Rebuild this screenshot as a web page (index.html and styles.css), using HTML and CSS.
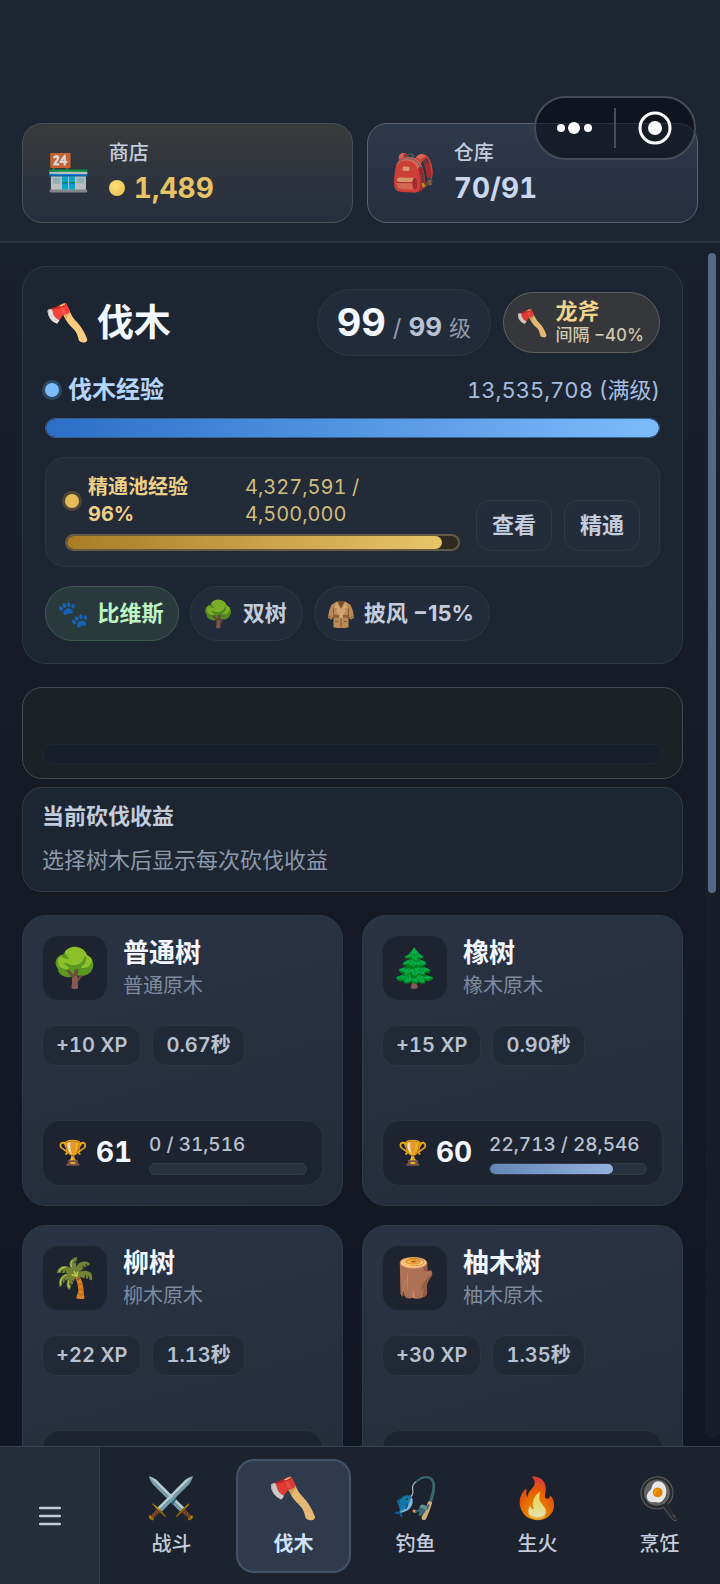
FILE: index.html
```html
<!DOCTYPE html>
<html lang="zh-CN">
<head>
  <meta charset="UTF-8" />
  <meta name="viewport" content="width=device-width, initial-scale=1.0"/>
  <title>伐木</title>
  <link rel="stylesheet" href="styles.css">
</head>
<body>
  <header class="topbar">
    <button class="stat stat-shop">
      <span class="emoji">🏪</span>
      <span class="stat-text">
        <span class="stat-label">商店</span>
        <span class="stat-value"><i class="coin"></i>1,489</span>
      </span>
    </button>
    <button class="stat stat-bag">
      <span class="emoji">🎒</span>
      <span class="stat-text">
        <span class="stat-label">仓库</span>
        <span class="stat-value">70/91</span>
      </span>
    </button>
    <div class="capsule">
      <button aria-label="更多">
        <svg width="36" height="14" viewBox="0 0 36 14" fill="#fff"><circle cx="4" cy="7" r="4"/><circle cx="17" cy="7" r="6"/><circle cx="31" cy="7" r="4"/></svg>
      </button>
      <button aria-label="关闭">
        <svg width="34" height="34" viewBox="0 0 34 34"><circle cx="17" cy="17" r="15" fill="none" stroke="#fff" stroke-width="3"/><circle cx="17" cy="17" r="7" fill="#fff"/></svg>
      </button>
    </div>
  </header>

  <div class="scroll-wrap">
    <main class="content">
      <section class="panel skill">
        <div class="skill-head">
          <h1><span class="emoji">🪓</span>伐木</h1>
          <div class="level"><b>99</b><span>/</span><strong>99</strong><small>级</small></div>
          <button class="tool">
            <span class="emoji">🪓</span>
            <span class="tool-text"><b>龙斧</b><small>间隔 −40%</small></span>
          </button>
        </div>

        <div class="exp-row">
          <span class="exp-name"><i class="dot"></i>伐木经验</span>
          <span class="exp-value">13,535,708 (满级)</span>
        </div>
        <div class="bar bar-exp"><div class="fill" style="width: 100%"></div></div>

        <div class="pool">
          <div class="pool-main">
            <div class="pool-row">
              <i class="dot gold"></i>
              <span class="pool-name">精通池经验 96%</span>
              <span class="pool-value">4,327,591 / 4,500,000</span>
            </div>
            <div class="bar bar-pool"><div class="fill" style="width: 96%"></div></div>
          </div>
          <button class="small-btn">查看</button>
          <button class="small-btn">精通</button>
        </div>

        <div class="buffs">
          <button class="buff active"><span class="emoji">🐾</span>比维斯</button>
          <button class="buff"><span class="emoji">🌳</span>双树</button>
          <button class="buff">
            <svg class="coat" viewBox="0 0 32 32">
              <path d="M11 3 6 6Q3 11 2 20l4 2 2-4v12q8 2 16 0V18l2 4 4-2Q29 11 26 6l-5-3z" fill="#b98a56"/>
              <path d="M11 3 9 9l3 1-1 3 5 6 5-6-1-3 3-1-2-6-5 8z" fill="#d3a671"/>
              <path d="M12 2h8l-4 8z" fill="#75502d"/>
              <path d="M8 17h16v3H8z" fill="#8d6238"/>
              <path d="M14 16h4v5h-4z" fill="#d3a671"/>
              <path d="M16 20v10M8 10v8M24 10v8M10 24h3M19 24h3M2 18l4 2M30 18l-4 2" fill="none" stroke="#85592f"/>
            </svg>披风 −15%
          </button>
        </div>
      </section>

      <section class="panel action">
        <div class="bar bar-action"></div>
      </section>

      <section class="panel gains">
        <h2>当前砍伐收益</h2>
        <p>选择树木后显示每次砍伐收益</p>
      </section>

      <section class="trees">
        <article class="tree">
          <div class="tree-head">
            <span class="tree-icon emoji">🌳</span>
            <div><h3>普通树</h3><p>普通原木</p></div>
          </div>
          <div class="tags"><span>+10 XP</span><span>0.67秒</span></div>
          <div class="mastery">
            <span class="emoji">🏆</span><b>61</b>
            <div class="mastery-exp">
              <span>0 / 31,516</span>
              <div class="bar bar-mastery"></div>
            </div>
          </div>
        </article>

        <article class="tree">
          <div class="tree-head">
            <span class="tree-icon emoji">🌲</span>
            <div><h3>橡树</h3><p>橡木原木</p></div>
          </div>
          <div class="tags"><span>+15 XP</span><span>0.90秒</span></div>
          <div class="mastery">
            <span class="emoji">🏆</span><b>60</b>
            <div class="mastery-exp">
              <span>22,713 / 28,546</span>
              <div class="bar bar-mastery"><div class="fill" style="width: 79%"></div></div>
            </div>
          </div>
        </article>

        <article class="tree">
          <div class="tree-head">
            <span class="tree-icon emoji">🌴</span>
            <div><h3>柳树</h3><p>柳木原木</p></div>
          </div>
          <div class="tags"><span>+22 XP</span><span>1.13秒</span></div>
          <div class="mastery"></div>
        </article>

        <article class="tree">
          <div class="tree-head">
            <span class="tree-icon emoji">🪵</span>
            <div><h3>柚木树</h3><p>柚木原木</p></div>
          </div>
          <div class="tags"><span>+30 XP</span><span>1.35秒</span></div>
          <div class="mastery"></div>
        </article>
      </section>
    </main>
    <div class="scrollbar"><div class="thumb"></div></div>
  </div>

  <nav class="bottom">
    <button class="menu" aria-label="菜单">
      <svg width="22" height="20" viewBox="0 0 22 20" stroke="#c3cad8" stroke-width="2.4" stroke-linecap="round"><path d="M1 2h20M1 10h20M1 18h20"/></svg>
    </button>
    <div class="tabs">
      <button class="tab"><span class="emoji">⚔️</span>战斗</button>
      <button class="tab active"><span class="emoji">🪓</span>伐木</button>
      <button class="tab"><span class="emoji">🎣</span>钓鱼</button>
      <button class="tab"><span class="emoji">🔥</span>生火</button>
      <button class="tab"><span class="emoji">🍳</span>烹饪</button>
    </div>
  </nav>
</body>
</html>
```
FILE: styles.css
```css
* {
  box-sizing: border-box;
}
body {
  margin: 0;
  height: 100vh;
  display: flex;
  flex-direction: column;
  overflow: hidden;
  font-family: Inter, "Noto Sans CJK SC", sans-serif;
  font-size: 20px;
  line-height: 1.2;
  font-variant-numeric: tabular-nums;
  color: #c3cbdc;
  background: linear-gradient(to bottom, #1b2231, #161a25 50%, #121620);
}
h1, h2, h3, p {
  margin: 0;
}
button {
  font: inherit;
  font-variant-numeric: inherit;
  color: inherit;
  padding: 0;
  border: none;
  background: none;
  cursor: pointer;
}
.emoji {
  font-family: "Noto Color Emoji", sans-serif;
  font-weight: 400;
  line-height: 1;
  flex: none;
}

/* top bar */
.topbar {
  position: relative;
  flex: none;
  display: flex;
  gap: 14px;
  padding: 123px 22px 18px;
  background: #1e2532;
  border-bottom: 2px solid #2b313d;
}
.stat {
  flex: 1;
  display: flex;
  align-items: center;
  gap: 18px;
  height: 100px;
  padding: 0 23px;
  border: 1px solid #4b4f55;
  border-radius: 20px;
  text-align: left;
}
.stat .emoji {
  font-size: 36px;
  opacity: 0.8;
}
.stat-shop {
  background: linear-gradient(to bottom, #393b3b, #252e3e);
}
.stat-bag {
  background: linear-gradient(to bottom, #2e394c, #262e3f);
  border-color: #566175;
}
.stat-text {
  display: flex;
  flex-direction: column;
}
.stat-label {
  line-height: 30px;
  font-weight: 500;
}
.stat-value {
  display: flex;
  align-items: center;
  gap: 9px;
  font-size: 28px;
  line-height: 40px;
  font-weight: 700;
  color: #c9d8ee;
}
.stat-shop .stat-value {
  color: #e8c265;
}
.coin {
  width: 16px;
  height: 16px;
  border-radius: 50%;
  background: radial-gradient(circle at 40% 35%, #ffe07a, #e5b94c);
}
.capsule {
  position: absolute;
  top: 96px;
  right: 24px;
  width: 162px;
  height: 64px;
  display: flex;
  align-items: center;
  border: 2px solid #474b53;
  border-radius: 32px;
  background: rgba(5, 8, 14, 0.55);
}
.capsule button {
  flex: 1;
  height: 40px;
  display: flex;
  align-items: center;
  justify-content: center;
}
.capsule button + button {
  border-left: 2px solid #4a4e56;
}

/* scroll area */
.scroll-wrap {
  flex: 1;
  min-height: 0;
  display: flex;
}
.content {
  flex: 1;
  overflow-y: auto;
  scrollbar-width: none;
  padding: 23px 22px 0;
}
.scrollbar {
  width: 15px;
  padding: 10px 4px 0 3px;
  margin-bottom: 8px;
  background: linear-gradient(to bottom, #191f2c, #171c28);
  border-radius: 8px;
}
.thumb {
  height: 54%;
  border-radius: 4px;
  background: #536886;
}
.panel {
  border: 1px solid #2f3745;
  border-radius: 24px;
  background: #1e2532;
}
.bar {
  border-radius: 10px;
  overflow: hidden;
}
.fill {
  height: 100%;
  border-radius: 10px;
}

/* skill panel */
.skill {
  padding: 22px;
}
.skill-head {
  display: flex;
  align-items: center;
  gap: 12px;
}
h1 {
  flex: 1;
  display: flex;
  align-items: center;
  gap: 7px;
  font-size: 37px;
  line-height: 48px;
  color: #f3f7ff;
}
h1 .emoji {
  font-size: 36px;
}
.level {
  display: flex;
  align-items: baseline;
  gap: 7px;
  height: 67px;
  padding: 0 19px;
  border: 1px solid #2d3644;
  border-radius: 34px;
  background: #222b39;
  color: #8f99ab;
  font-size: 24px;
  line-height: 24px;
}
.level b {
  font-size: 38px;
  line-height: 64px;
  color: #f3f7ff;
}
.level strong {
  font-size: 26px;
  color: #b9c2d4;
}
.level small {
  font-size: 22px;
}
.tool {
  display: flex;
  align-items: center;
  gap: 7px;
  height: 61px;
  padding: 0 15px 0 12px;
  border: 1px solid #626058;
  border-radius: 31px;
  background: #35373a;
  text-align: left;
}
.tool .emoji {
  font-size: 26px;
}
.tool-text {
  display: flex;
  flex-direction: column;
}
.tool-text b {
  font-size: 22px;
  line-height: 24px;
  color: #f2d48c;
}
.tool-text small {
  font-size: 17px;
  line-height: 24px;
  font-weight: 500;
  color: #cfc7b0;
}
.exp-row {
  display: flex;
  align-items: center;
  justify-content: space-between;
  margin-top: 16px;
  line-height: 36px;
  font-size: 22px;
}
.exp-name {
  display: flex;
  align-items: center;
  gap: 9px;
  font-size: 24px;
  font-weight: 700;
  color: #b5d5fa;
}
.exp-value {
  color: #a5bddf;
}
.dot {
  width: 14px;
  height: 14px;
  flex: none;
  border-radius: 50%;
  background: #7cbcf8;
  box-shadow: 0 0 0 3px #2d4966;
}
.dot.gold {
  background: #e8bb5a;
  box-shadow: 0 0 0 3px #4e4739;
}
.bar-exp {
  height: 20px;
  margin-top: 10px;
  border: 1px solid #3a5f92;
}
.bar-exp .fill {
  background: linear-gradient(to right, #2c6ec6, #7cbcfc);
}
.pool {
  display: flex;
  align-items: flex-end;
  gap: 12px;
  margin-top: 19px;
  padding: 16px 19px 15px;
  border: 1px solid #2e3644;
  border-radius: 20px;
  background: #232a38;
}
.pool-main {
  flex: 1;
  margin-right: 4px;
}
.pool-row {
  display: flex;
  align-items: center;
  gap: 9px;
  line-height: 27px;
  color: #d0bd7d;
}
.pool-name {
  width: 104px;
  font-weight: 700;
  color: #edcf87;
}
.pool-value {
  width: 120px;
  margin-left: 44px;
}
.bar-pool {
  height: 17px;
  margin-top: 6px;
  border: 2px solid #655b45;
  background: #2e2921;
}
.bar-pool .fill {
  background: linear-gradient(to right, #a97b27, #e8c568);
}
.small-btn {
  width: 76px;
  height: 51px;
  border: 1px solid #2f3846;
  border-radius: 14px;
  background: #232c3a;
  font-size: 22px;
  font-weight: 600;
}
.buffs {
  display: flex;
  gap: 11px;
  margin-top: 19px;
}
.buff {
  display: flex;
  align-items: center;
  gap: 8px;
  height: 55px;
  padding: 0 15px 0 11px;
  border: 1px solid #2e3745;
  border-radius: 28px;
  background: #222b39;
  font-size: 22px;
  font-weight: 700;
  font-variant-numeric: normal;
}
.buff .emoji {
  font-size: 26px;
}
.coat {
  width: 30px;
  height: 30px;
}
.buff.active {
  border-color: #415c4e;
  background: #283a3c;
  color: #bff3c4;
}

/* current action */
.action {
  margin-top: 23px;
  padding: 56px 19px 14px;
  border-color: #464a50;
  border-radius: 20px;
  background: #1b2125;
}
.bar-action {
  height: 20px;
  border: 1px solid #202931;
  background: #191f28;
}
.gains {
  margin-top: 8px;
  padding: 11px 19px 14px;
  border-color: #343b48;
  border-radius: 20px;
  font-size: 22px;
}
.gains h2 {
  font-size: 22px;
  line-height: 34px;
  font-weight: 600;
}
.gains p {
  margin-top: 10px;
  line-height: 34px;
  color: #8d98aa;
}

/* tree cards */
.trees {
  display: grid;
  grid-template-columns: repeat(2, minmax(0, 1fr));
  gap: 19px;
  margin-top: 23px;
}
.tree {
  padding: 19px;
  border: 1px solid #303948;
  border-radius: 24px;
  background: linear-gradient(165deg, #2a3344, #242c3a);
}
.tree-head {
  display: flex;
  align-items: center;
  gap: 15px;
}
.tree-icon {
  width: 66px;
  height: 66px;
  display: flex;
  align-items: center;
  justify-content: center;
  border: 1px solid #29313e;
  border-radius: 16px;
  background: #1d2430;
  font-size: 38px;
}
.tree h3 {
  font-size: 26px;
  line-height: 36px;
  color: #f3f7ff;
}
.tree p {
  line-height: 30px;
  color: #7f8a9e;
}
.tags {
  display: flex;
  gap: 11px;
  margin-top: 24px;
}
.tags span {
  padding: 0 13px;
  line-height: 39px;
  border: 1px solid #2d3542;
  border-radius: 14px;
  background: #222936;
  font-weight: 600;
  color: #b9c1d0;
}
.mastery {
  display: flex;
  align-items: center;
  gap: 8px;
  height: 66px;
  margin-top: 54px;
  padding: 0 15px;
  border: 1px solid #2b3340;
  border-radius: 18px;
  background: #1d2430;
}
.mastery .emoji {
  font-size: 24px;
}
.mastery b {
  font-size: 28px;
  color: #f3f7ff;
}
.mastery-exp {
  flex: 1;
  margin-left: 9px;
  font-size: 19px;
  line-height: 28px;
  font-weight: 500;
  color: #b9c1d0;
  white-space: nowrap;
}
.bar-mastery {
  height: 12px;
  margin-top: 4px;
  border: 1px solid #323a47;
  background: #29313e;
}
.bar-mastery .fill {
  background: linear-gradient(to right, #6387b7, #94b1dc);
}

/* bottom nav */
.bottom {
  flex: none;
  display: flex;
  height: 138px;
  border-top: 1px solid #39414d;
  background: #1c232e;
}
.menu {
  width: 100px;
  display: flex;
  align-items: center;
  justify-content: center;
  border-right: 1px solid #343c48;
  background: #252d3b;
}
.tabs {
  flex: 1;
  display: flex;
  gap: 7px;
  padding: 12px 3px 11px 14px;
}
.tab {
  flex: 1;
  display: flex;
  flex-direction: column;
  align-items: center;
  padding-top: 18px;
  gap: 10px;
  line-height: 30px;
  font-weight: 500;
  border: 2px solid transparent;
  border-radius: 18px;
}
.tab .emoji {
  font-size: 40px;
}
.tab.active {
  border-color: #43536b;
  background: #2f3b4d;
  font-weight: 700;
  color: #cfe2fb;
}
.tool .emoji,
.buff .emoji,
.tree .emoji,
.tab .emoji {
  text-shadow: none;
  filter: brightness(0.9);
}
.tree .tree-icon {
  filter: none;
}
```
